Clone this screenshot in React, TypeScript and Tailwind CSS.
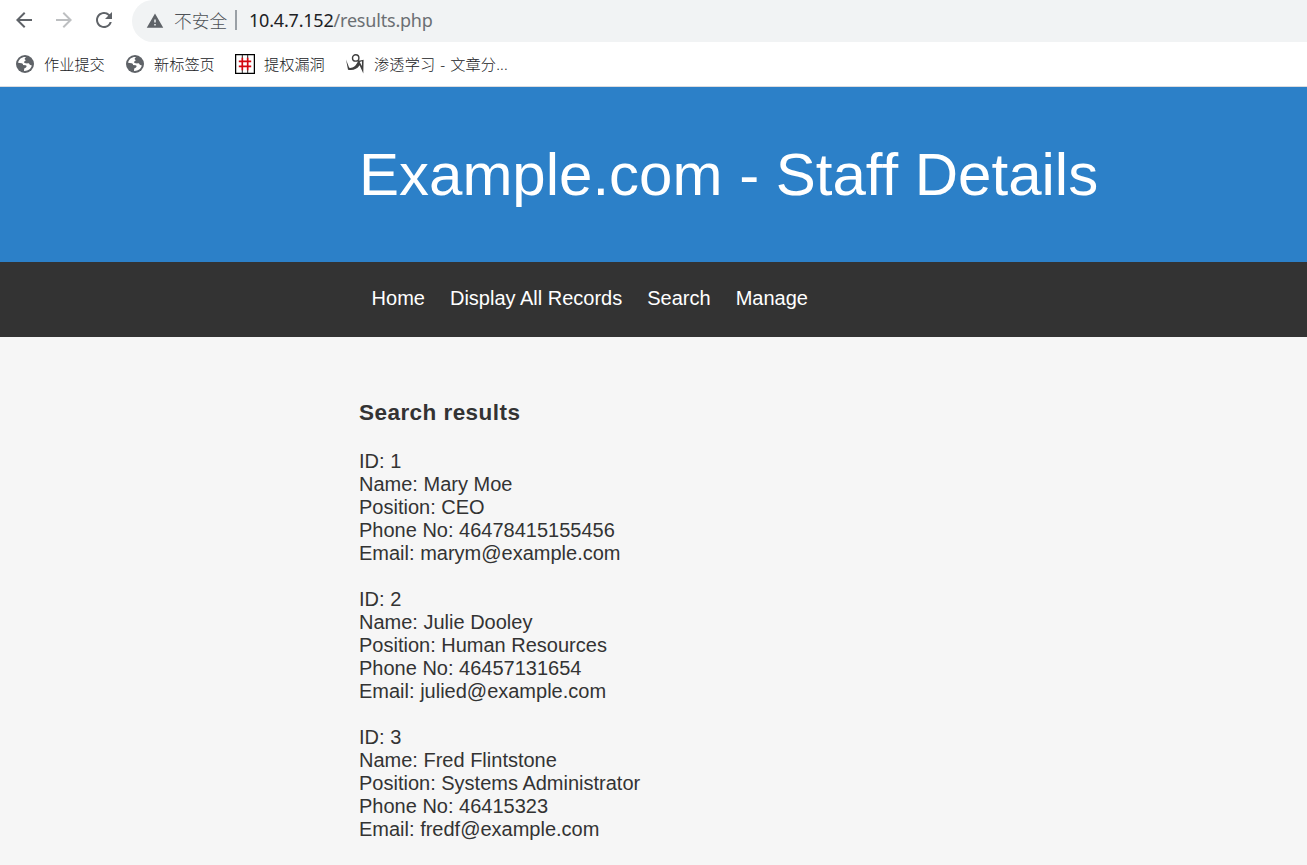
import type { ReactNode } from 'react';
import { MdArrowBack, MdArrowForward, MdRefresh, MdWarning } from 'react-icons/md';

interface StaffRecord {
  id: number;
  name: string;
  position: string;
  phone: string;
  email: string;
}

const records: StaffRecord[] = [
  { id: 1, name: 'Mary Moe', position: 'CEO', phone: '46478415155456', email: 'marym@example.com' },
  { id: 2, name: 'Julie Dooley', position: 'Human Resources', phone: '46457131654', email: 'julied@example.com' },
  { id: 3, name: 'Fred Flintstone', position: 'Systems Administrator', phone: '46415323', email: 'fredf@example.com' },
];

const navItems = ['Home', 'Display All Records', 'Search', 'Manage'];

function GlobeIcon() {
  return (
    <svg viewBox="0 0 18 18" className="size-[18px]">
      <circle cx="9" cy="9" r="9" fill="#5f6368" />
      <path
        d="M10.2 2.1C6.3 1.5 2.8 4 2.1 7.700L5.600 8.200C6.700 8.300 7.300 9.200 7 10.100L9.600 10.300C10.700 10.500 10.900 11.700 10 12.400L8.200 13.400L8 15.900C11.600 16.300 14.900 14 15.800 10.500L13.800 9.700C13.200 8.600 12.500 8.100 11.200 8.400L8.500 8.100C7.700 7.300 8.100 6.200 9.300 6.100L9.600 5.100L8.700 4.300C8.600 3.400 9.200 2.700 10.200 2.100Z"
        fill="#fff"
      />
    </svg>
  );
}

function HashIcon() {
  return (
    <svg viewBox="0 0 20 20" className="size-5">
      <rect x="0.6" y="0.6" width="18.8" height="18.8" fill="#fff" stroke="#000" strokeWidth="1.3" />
      <path d="M7.300 1V4M12.700 1V4M7.300 16V19M12.700 16V19" stroke="#222" strokeWidth="1" />
      <path d="M7.300 3.800V16.200M12.700 3.800V16.200M3.800 7.400H16.200M3.800 12.400H16.200" stroke="#d4070f" strokeWidth="1.7" />
    </svg>
  );
}

function FigureIcon() {
  return (
    <svg viewBox="0 0 20 20" className="size-5">
      <circle cx="10.700" cy="3.900" r="3.200" fill="none" stroke="#3f3f3f" strokeWidth="1.400" />
      <path
        d="M1 5.500L4.200 13.800C7.500 14.300 11 12.500 13.400 6.200L15 6.500L18.600 5.800L18.300 19.500L14.600 11.200C12 15.300 8 16.600 3 15.700Z"
        fill="#3f3f3f"
      />
      <path d="M14.700 8L17 7.300L16.900 12Z" fill="#fff" />
    </svg>
  );
}

const bookmarks: { label: string; icon: ReactNode; width: string }[] = [
  { label: '作业提交', icon: <GlobeIcon />, width: 'w-[110px]' },
  { label: '新标签页', icon: <GlobeIcon />, width: 'w-[110px]' },
  { label: '提权漏洞', icon: <HashIcon />, width: 'w-[110px]' },
  { label: '渗透学习 - 文章分...', icon: <FigureIcon />, width: 'w-[180px] tracking-[0.15px] [word-spacing:0.8px]' },
];

function BrowserBar() {
  return (
    <div className="h-[87px] border-b border-[#dadce0] bg-white font-['Noto_Sans','Noto_Sans_CJK_SC',sans-serif]">
      <div className="flex h-[42px] pl-3">
        <div className="flex h-10 w-[120px] items-center gap-4 text-2xl text-[#5f6368]">
          <MdArrowBack />
          <MdArrowForward className="text-[#bdbfc1]" />
          <MdRefresh />
        </div>
        <div className="flex h-[42px] flex-1 items-center rounded-l-full bg-[#f1f3f4] pb-[2px] pl-[14px]">
          <MdWarning className="mt-px size-[18px] text-[#5f6368]" />
          <span className="ml-[10px] w-[55px] whitespace-nowrap font-['Noto_Sans_CJK_SC',sans-serif] text-[17.7px] font-light text-[#4d5156]">
            不安全
          </span>
          <span className="ml-[6px] h-5 w-[2px] bg-[#9aa0a6]" />
          <span className="ml-3 text-lg tracking-[-0.2px] text-[#202124]">
            10.4.7.152<span className="text-[#6b6f73]">/results.php</span>
          </span>
        </div>
      </div>
      <div className="flex h-[44px] items-center pl-[15px]">
        {bookmarks.map((b) => (
          <div key={b.label} className={`flex items-center ${b.width}`}>
            <span className="flex w-5 shrink-0 items-center justify-center">{b.icon}</span>
            <span className="ml-[9px] whitespace-nowrap text-[15.2px] font-light leading-5 text-[#202124]">{b.label}</span>
          </div>
        ))}
      </div>
    </div>
  );
}

function Record({ record }: { record: StaffRecord }) {
  return (
    <div className="mb-[23px]">
      <p>ID: {record.id}</p>
      <p>Name: {record.name}</p>
      <p>Position: {record.position}</p>
      <p>Phone No: {record.phone}</p>
      <p>Email: {record.email}</p>
    </div>
  );
}

export default function App() {
  return (
    <div className="h-[865px] overflow-hidden bg-[#f6f6f6] font-['Liberation_Sans',Arial,sans-serif] text-xl leading-[23px] text-[#333]">
      <BrowserBar />
      <header className="h-[175px] bg-[#2c80c8] pl-[359px] pt-[53px] text-white">
        <h1 className="text-[60px] leading-[69px]">Example.com - Staff Details</h1>
      </header>
      <nav className="flex h-[75px] gap-[25px] bg-[#333] pl-[371.6px] pt-[25px] text-white">
        {navItems.map((item) => (
          <a key={item} href="#">{item}</a>
        ))}
      </nav>
      <main className="pl-[359px] pt-[63px]">
        <h2 className="mb-6 text-[22.5px] font-bold leading-[26px] tracking-[0.45px]">Search results</h2>
        {records.map((record) => (
          <Record key={record.id} record={record} />
        ))}
      </main>
    </div>
  );
}
